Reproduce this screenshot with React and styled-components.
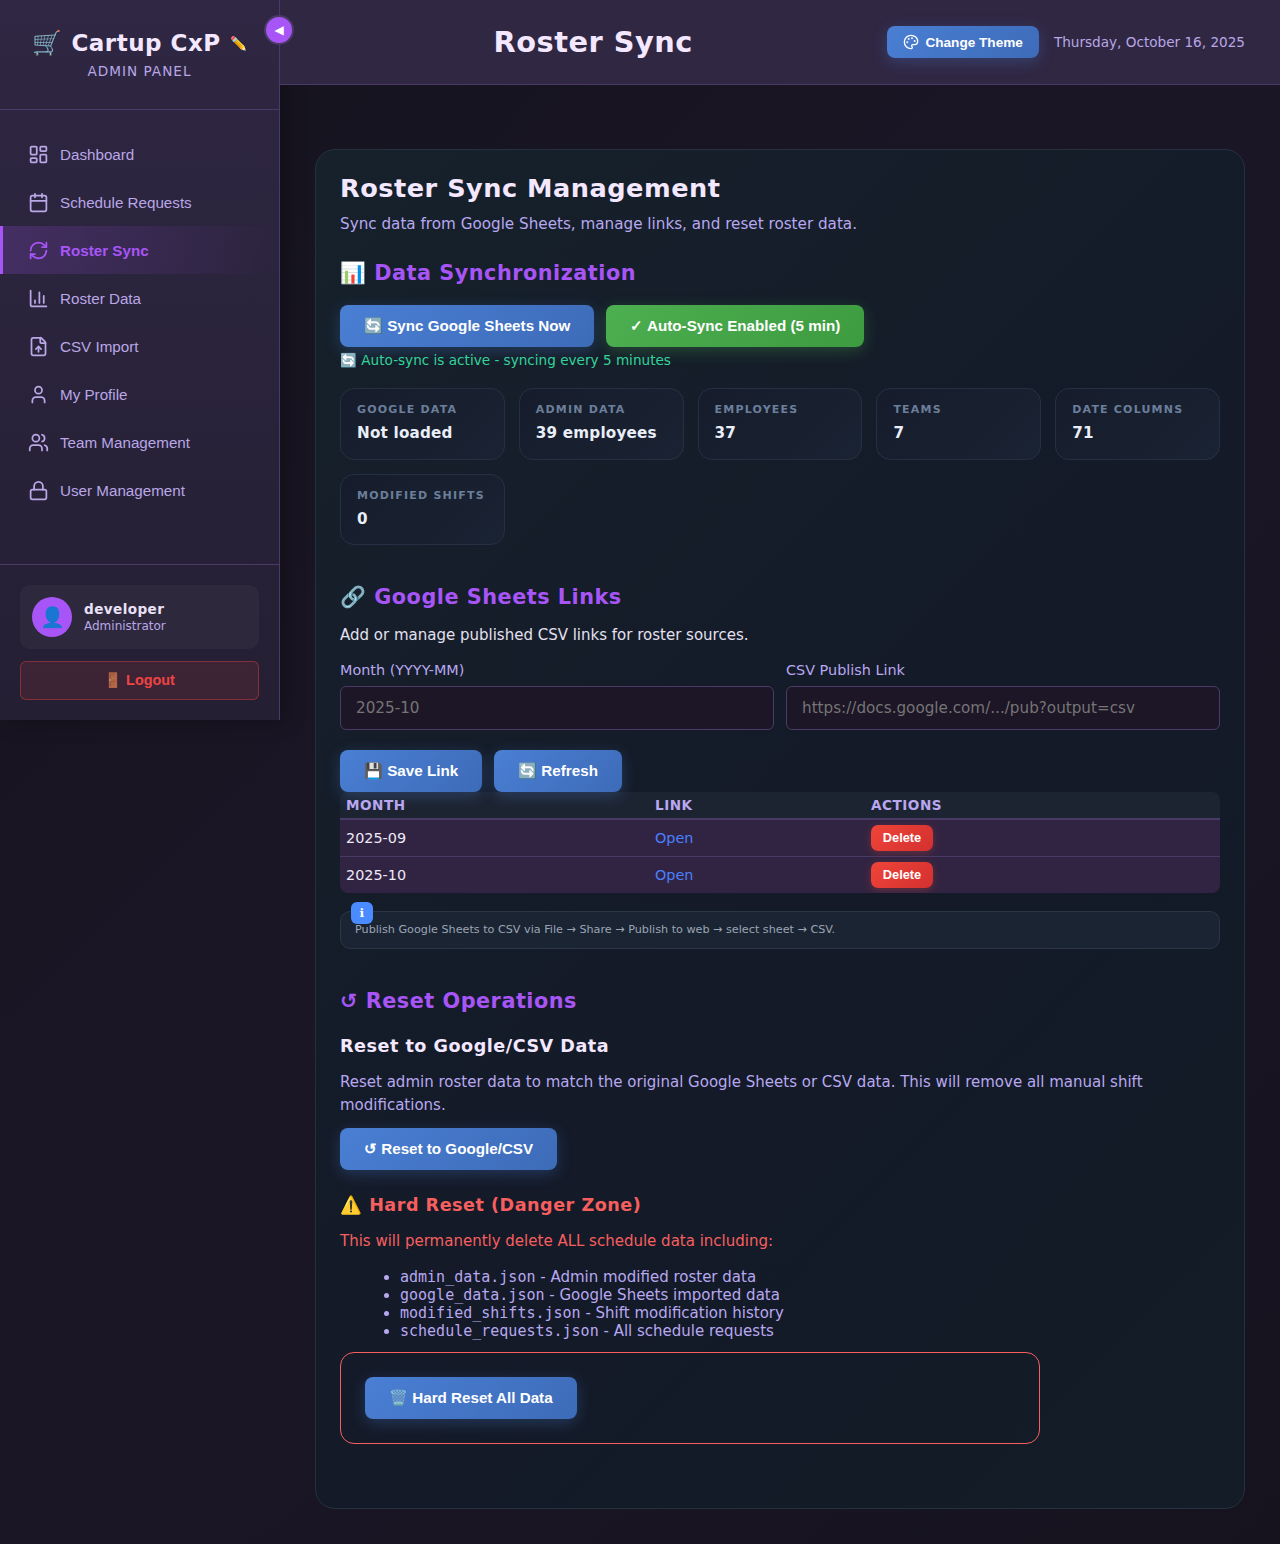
import React from 'react'
import styled, { createGlobalStyle } from 'styled-components'
import { LayoutDashboard, Calendar, RefreshCw, ChartColumn, FileUp, User, Users, Lock, Palette } from 'lucide-react'

const GlobalStyle = createGlobalStyle`
  * { box-sizing: border-box; }
  html, body { margin: 0; padding: 0; }
  body {
    background: linear-gradient(135deg, #15131e 0%, #1b1626 50%, #16131f 100%);
    font-family: "DejaVu Sans", sans-serif;
    color: #f0ebfa;
    min-height: 1544px;
  }
`

const Layout = styled.div`
  display: flex;
  align-items: flex-start;
  width: 1280px;
  position: relative;
`

const Sidebar = styled.aside`
  width: 280px;
  height: 720px;
  flex-shrink: 0;
  display: flex;
  flex-direction: column;
  background: linear-gradient(180deg, #2f2743 0%, #241f33 100%);
  border-right: 1px solid #4a3a68;
  box-shadow: 4px 0 20px rgba(0, 0, 0, 0.3);
`

const Brand = styled.div`
  height: 110px;
  padding-top: 27px;
  border-bottom: 1px solid #4a3a68;
  text-align: center;
`

const BrandTitle = styled.div`
  display: flex;
  align-items: center;
  justify-content: center;
  gap: 9px;
  font-size: 23px;
  line-height: 32px;
  font-weight: 700;
  letter-spacing: 0.5px;
  color: #f3e8ff;
  small { font-size: 13.5px; font-weight: 400; }
  i { font-size: 24px; font-style: normal; font-weight: 400; }
`

const BrandSub = styled.div`
  margin-top: 4px;
  font-size: 13.6px;
  line-height: 16px;
  letter-spacing: 1px;
  color: #b9a7e6;
`

const ToggleButton = styled.button`
  position: absolute;
  left: 264px;
  top: 15px;
  width: 30px;
  height: 30px;
  padding: 0;
  border-radius: 50%;
  border: 2px solid #4a3a68;
  background: #a855f7;
  color: #fff;
  font-size: 12px;
  line-height: 1;
  display: flex;
  align-items: center;
  justify-content: center;
  font-family: "DejaVu Sans", sans-serif;
`

const Nav = styled.nav`
  flex: 1;
  padding-top: 20px;
`

const NavItem = styled.a`
  display: flex;
  align-items: center;
  gap: 11px;
  height: 48px;
  padding-left: ${p => (p.$active ? '25px' : '28px')};
  font-family: "Liberation Sans", Arial, sans-serif;
  font-size: 15.2px;
  font-weight: ${p => (p.$active ? 700 : 400)};
  color: ${p => (p.$active ? '#a855f7' : '#b9a7e6')};
  border-left: ${p => (p.$active ? '3px solid #a855f7' : '0')};
  background: ${p => (p.$active ? 'linear-gradient(90deg, rgba(168, 85, 247, 0.2), rgba(168, 85, 247, 0) 100%)' : 'none')};
`

const SidebarFooter = styled.div`
  border-top: 1px solid #4a3a68;
  padding: 20px 20px 20px;
`

const UserCard = styled.div`
  height: 64px;
  display: flex;
  align-items: center;
  gap: 12px;
  padding: 0 12px;
  border-radius: 10px;
  background: rgba(255, 255, 255, 0.04);
`

const Avatar = styled.div`
  width: 40px;
  height: 40px;
  border-radius: 50%;
  background: #a855f7;
  font-size: 20px;
  display: flex;
  align-items: center;
  justify-content: center;
`

const UserName = styled.div`
  font-size: 13.6px;
  line-height: 17px;
  font-weight: 700;
  letter-spacing: 0.4px;
  color: #e9e1f8;
`

const UserRole = styled.div`
  margin-top: 1px;
  font-size: 12px;
  line-height: 15px;
  color: #b9a7e6;
`

const LogoutButton = styled.button`
  width: 100%;
  height: 39px;
  margin-top: 12px;
  padding: 0;
  border-radius: 6px;
  border: 1px solid rgba(239, 68, 68, 0.4);
  background: rgba(239, 68, 68, 0.12);
  color: #ef4444;
  font-family: "Liberation Sans", Arial, sans-serif;
  font-size: 14.4px;
  font-weight: 700;
`

const Main = styled.main`
  flex: 1;
  min-width: 0;
`

const TopBar = styled.header`
  height: 85px;
  display: flex;
  align-items: center;
  gap: 16px;
  padding: 0 35px;
  background: #302743;
  border-bottom: 1px solid #4a3a68;
`

const PageTitle = styled.h1`
  flex: 1;
  margin: 0;
  text-align: center;
  font-size: 28.8px;
  font-weight: 700;
  letter-spacing: 0.5px;
  color: #f3e8ff;
`

const TopRight = styled.div`
  display: flex;
  align-items: center;
  gap: 15px;
`

const DateText = styled.span`
  font-size: 13.6px;
  color: #b9a7e6;
`

const Button = styled.button`
  display: inline-flex;
  align-items: center;
  justify-content: center;
  gap: ${p => (p.$small ? '6px' : '0')};
  height: ${p => (p.$small ? '32px' : '42px')};
  padding: ${p => (p.$small ? '0 16px' : '0 24px')};
  border: 0;
  border-radius: 8px;
  font-family: "Liberation Sans", Arial, sans-serif;
  font-size: ${p => (p.$small ? '13.6px' : '15.2px')};
  font-weight: 700;
  color: #fff;
  white-space: pre;
  background: ${p => (p.$green
    ? 'linear-gradient(135deg, #4caf50, #3d9b40)'
    : 'linear-gradient(135deg, #4a7fd4, #3d6bb8)')};
  box-shadow: 0 4px 15px ${p => (p.$green ? 'rgba(76, 175, 80, 0.3)' : 'rgba(74, 127, 212, 0.3)')};
`

const Content = styled.div`
  padding: 64px 35px 35px;
`

const Card = styled.section`
  height: 1360px;
  padding: 23px 24px 24px;
  border: 1px solid #24323f;
  border-radius: 20px;
  background: linear-gradient(135deg, #16212b 0%, #141a28 55%, #131c27 100%);
`

const CardTitle = styled.h2`
  margin: 0;
  font-size: 25.6px;
  line-height: 30px;
  font-weight: 700;
  letter-spacing: 0.5px;
  color: #f3e8ff;
`

const Lead = styled.p`
  margin: 11px 0 0;
  font-size: 15.2px;
  line-height: 20px;
  color: #b8a8f0;
`

const SectionTitle = styled.h3`
  margin: ${p => p.$top || '0'} 0 0;
  font-size: 20.8px;
  line-height: 28px;
  font-weight: 700;
  letter-spacing: 0.5px;
  color: #a855f7;
`

const ButtonRow = styled.div`
  display: flex;
  gap: 12px;
  margin-top: ${p => p.$top || '0'};
`

const SyncStatus = styled.div`
  margin-top: 4px;
  font-size: 13.6px;
  line-height: 18px;
  color: #34d399;
`

const StatGrid = styled.div`
  display: grid;
  grid-template-columns: repeat(5, 1fr);
  gap: 14px;
  margin-top: 19px;
`

const StatCard = styled.div`
  height: 71.5px;
  padding: 14px 16px;
  border: 1px solid #253142;
  border-radius: 14px;
  background: linear-gradient(135deg, #161c2b, #1a2333);
`

const StatLabel = styled.div`
  font-size: 11px;
  line-height: 14px;
  font-weight: 700;
  letter-spacing: 1.2px;
  text-transform: uppercase;
  color: #6b7f9b;
`

const StatValue = styled.div`
  margin-top: 5px;
  font-size: 15.2px;
  line-height: 22px;
  font-weight: 700;
  letter-spacing: 0.2px;
  color: #e9eef8;
`

const HelpText = styled.p`
  margin: 14px 0 0;
  font-size: 15px;
  line-height: 20px;
  color: #e4e0f0;
`

const FieldRow = styled.div`
  display: grid;
  grid-template-columns: 1fr 1fr;
  gap: 12px;
  margin-top: 16px;
`

const FieldLabel = styled.label`
  display: block;
  font-size: 14.4px;
  line-height: 18px;
  color: #b8a8f0;
`

const Input = styled.input`
  display: block;
  width: 100%;
  height: 44px;
  margin-top: 7px;
  padding: 0 15px;
  border: 1px solid #4a3a68;
  border-radius: 6px;
  background: #1d1627;
  color: #f3eefc;
  font-family: "DejaVu Sans", sans-serif;
  font-size: 15.2px;
  &::placeholder { color: #757575; }
`

const Table = styled.table`
  width: 880px;
  table-layout: fixed;
  border-collapse: separate;
  border-spacing: 0;
  border-radius: 8px;
  overflow: hidden;
`

const HeadCell = styled.th`
  height: 28px;
  padding: 0 6px;
  text-align: left;
  font-size: 13.6px;
  font-weight: 700;
  letter-spacing: 0.5px;
  text-transform: uppercase;
  color: #b9a7f0;
  background: #1d2431;
  border-bottom: 2px solid #4a3a68;
  width: ${p => p.$w || 'auto'};
`

const Cell = styled.td`
  height: ${p => (p.$last ? '36px' : '37px')};
  padding: 0 6px;
  font-size: 14.4px;
  color: ${p => p.$color || '#efe9f8'};
  background: #312442;
  border-bottom: ${p => (p.$last ? '0' : '1px solid #4a3a68')};
`

const DeleteButton = styled.button`
  display: block;
  width: 62px;
  height: 26px;
  padding: 0 0 2px;
  border: 0;
  border-radius: 7px;
  background: linear-gradient(135deg, #ef4438, #d33030);
  box-shadow: 0 2px 8px rgba(239, 68, 56, 0.3);
  color: #fff;
  font-family: "Liberation Sans", Arial, sans-serif;
  font-size: 12.8px;
  font-weight: 700;
`

const InfoBox = styled.div`
  position: relative;
  height: 38px;
  margin-top: 18px;
  padding: 0 14px 2px;
  display: flex;
  align-items: center;
  border: 1px solid #2a3646;
  border-radius: 10px;
  background: #1b2433;
  font-size: 11.2px;
  color: #9aa5b5;
`

const InfoBadge = styled.span`
  position: absolute;
  left: 10px;
  top: -10px;
  width: 22px;
  height: 22px;
  border-radius: 6px;
  background: #4a8cff;
  color: #fff;
  font-size: 12px;
  font-weight: 700;
  display: flex;
  align-items: center;
  justify-content: center;
`

const SubTitle = styled.h4`
  margin: ${p => p.$top || '0'} 0 0;
  font-size: 17.6px;
  line-height: 24px;
  font-weight: 700;
  letter-spacing: 0.5px;
  color: ${p => p.$color || '#f3e8ff'};
`

const Paragraph = styled.p`
  margin: ${p => p.$top || '0'} 0 0;
  font-size: 15px;
  line-height: 23px;
  color: ${p => p.$color || '#b8a8f0'};
`

const FileList = styled.ul`
  margin: 15px 0 0;
  padding-left: 60px;
  font-size: 15px;
  line-height: 18px;
  color: #b8a8f0;
  code { font-family: "DejaVu Sans Mono", monospace; font-size: 15px; }
`

const DangerBox = styled.div`
  width: 700px;
  height: 92px;
  margin-top: 12px;
  padding: 24px;
  border: 1px solid #f75f5f;
  border-radius: 14px;
`

const navItems = [
  { label: 'Dashboard', Icon: LayoutDashboard },
  { label: 'Schedule Requests', Icon: Calendar },
  { label: 'Roster Sync', Icon: RefreshCw, active: true },
  { label: 'Roster Data', Icon: ChartColumn },
  { label: 'CSV Import', Icon: FileUp },
  { label: 'My Profile', Icon: User },
  { label: 'Team Management', Icon: Users },
  { label: 'User Management', Icon: Lock },
]

const stats = [
  ['Google Data', 'Not loaded'],
  ['Admin Data', '39 employees'],
  ['Employees', '37'],
  ['Teams', '7'],
  ['Date Columns', '71'],
  ['Modified Shifts', '0'],
]

const links = ['2025-09', '2025-10']

const files = [
  ['admin_data.json', ' - Admin modified roster data'],
  ['google_data.json', ' - Google Sheets imported data'],
  ['modified_shifts.json', ' - Shift modification history'],
  ['schedule_requests.json', ' - All schedule requests'],
]

export default function App() {
  return (
    <Layout>
      <GlobalStyle />
      <Sidebar>
        <Brand>
          <BrandTitle><i>🛒</i>Cartup CxP<small>✏️</small></BrandTitle>
          <BrandSub>ADMIN PANEL</BrandSub>
        </Brand>
        <Nav>
          {navItems.map(({ label, Icon, active }) => (
            <NavItem key={label} $active={active}>
              <Icon size={21} strokeWidth={2} />
              {label}
            </NavItem>
          ))}
        </Nav>
        <SidebarFooter>
          <UserCard>
            <Avatar>👤</Avatar>
            <div>
              <UserName>developer</UserName>
              <UserRole>Administrator</UserRole>
            </div>
          </UserCard>
          <LogoutButton>🚪 Logout</LogoutButton>
        </SidebarFooter>
      </Sidebar>
      <ToggleButton>◀</ToggleButton>
      <Main>
        <TopBar>
          <PageTitle>Roster Sync</PageTitle>
          <TopRight>
            <Button $small><Palette size={16} />Change Theme</Button>
            <DateText>Thursday, October 16, 2025</DateText>
          </TopRight>
        </TopBar>
        <Content>
          <Card>
            <CardTitle>Roster Sync Management</CardTitle>
            <Lead>Sync data from Google Sheets, manage links, and reset roster data.</Lead>
            <SectionTitle $top="25px">📊 Data Synchronization</SectionTitle>
            <ButtonRow $top="18px">
              <Button>🔄 Sync Google Sheets Now</Button>
              <Button $green>✓ Auto-Sync Enabled (5 min)</Button>
            </ButtonRow>
            <SyncStatus>🔄 Auto-sync is active - syncing every 5 minutes</SyncStatus>
            <StatGrid>
              {stats.map(([label, value]) => (
                <StatCard key={label}>
                  <StatLabel>{label}</StatLabel>
                  <StatValue>{value}</StatValue>
                </StatCard>
              ))}
            </StatGrid>
            <SectionTitle $top="38px">🔗 Google Sheets Links</SectionTitle>
            <HelpText>Add or manage published CSV links for roster sources.</HelpText>
            <FieldRow>
              <FieldLabel>Month (YYYY-MM)<Input placeholder="2025-10" /></FieldLabel>
              <FieldLabel>CSV Publish Link<Input placeholder="https://docs.google.com/.../pub?output=csv" /></FieldLabel>
            </FieldRow>
            <ButtonRow $top="20px">
              <Button>💾 Save Link</Button>
              <Button>🔄 Refresh</Button>
            </ButtonRow>
            <Table>
              <thead>
                <tr>
                  <HeadCell $w="309px">Month</HeadCell>
                  <HeadCell $w="216px">Link</HeadCell>
                  <HeadCell>Actions</HeadCell>
                </tr>
              </thead>
              <tbody>
                {links.map((month, i) => (
                  <tr key={month}>
                    <Cell $last={i === links.length - 1}>{month}</Cell>
                    <Cell $last={i === links.length - 1} $color="#4a80ff">Open</Cell>
                    <Cell $last={i === links.length - 1}><DeleteButton>Delete</DeleteButton></Cell>
                  </tr>
                ))}
              </tbody>
            </Table>
            <InfoBox>
              <InfoBadge>ℹ</InfoBadge>
              Publish Google Sheets to CSV via File → Share → Publish to web → select sheet → CSV.
            </InfoBox>
            <SectionTitle $top="38px">↺ Reset Operations</SectionTitle>
            <SubTitle $top="19px">Reset to Google/CSV Data</SubTitle>
            <Paragraph $top="13px">Reset admin roster data to match the original Google Sheets or CSV data. This will remove all manual shift modifications.</Paragraph>
            <ButtonRow $top="11px">
              <Button>↺ Reset to Google/CSV</Button>
            </ButtonRow>
            <SubTitle $top="23px" $color="#f75f5f">⚠️ Hard Reset (Danger Zone)</SubTitle>
            <Paragraph $top="13px" $color="#f75f5f">This will permanently delete ALL schedule data including:</Paragraph>
            <FileList>
              {files.map(([file, note]) => (
                <li key={file}><code>{file}</code>{note}</li>
              ))}
            </FileList>
            <DangerBox>
              <Button>🗑️ Hard Reset All Data</Button>
            </DangerBox>
          </Card>
        </Content>
      </Main>
    </Layout>
  )
}
